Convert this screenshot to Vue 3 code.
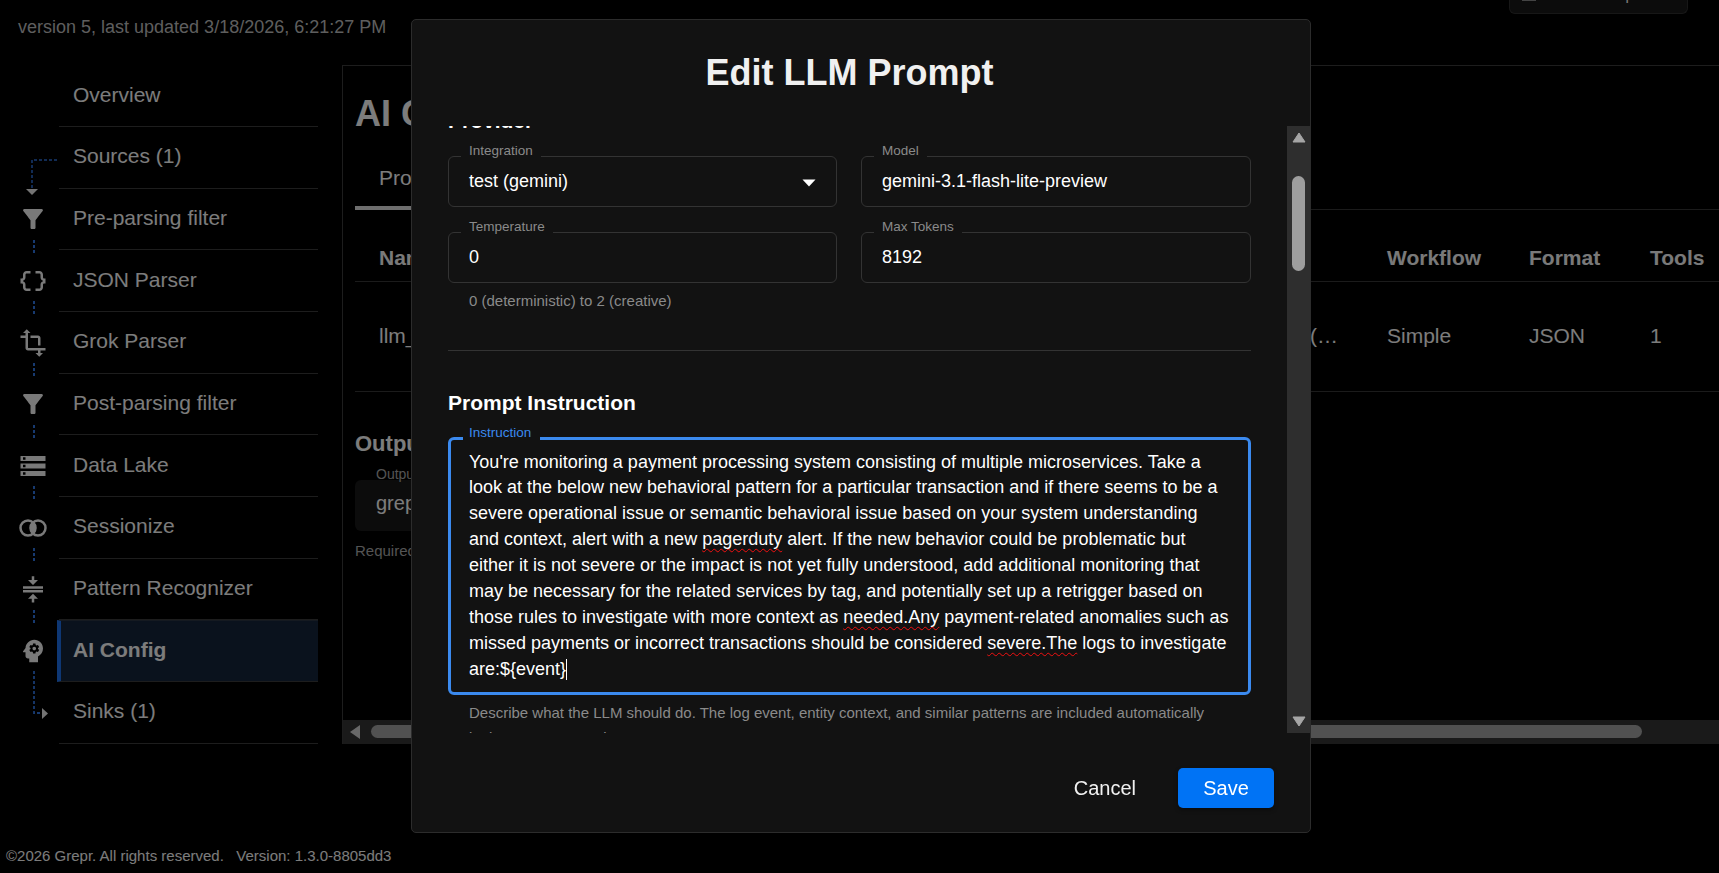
<script setup>
import { onMounted, ref } from "vue"

const filter = ["M4.25 5.61C6.27 8.2 10 13 10 13v6c0 .55.45 1 1 1h2c.55 0 1-.45 1-1v-6s3.72-4.8 5.74-7.39c.51-.66.04-1.61-.79-1.61H5.04c-.83 0-1.3.95-.79 1.61z"]

const navItems = [
  { label: "Overview" },
  { label: "Sources (1)", source: true },
  { label: "Pre-parsing filter", icon: filter, link: true },
  { label: "JSON Parser", link: true, icon: ["M4 7v2c0 .55-.45 1-1 1H2v4h1c.55 0 1 .45 1 1v2c0 1.65 1.35 3 3 3h3v-2H7c-.55 0-1-.45-1-1v-2c0-1.3-.84-2.42-2-2.83v-.34C5.16 11.42 6 10.3 6 9V7c0-.55.45-1 1-1h3V4H7C5.35 4 4 5.35 4 7zm17 3c-.55 0-1-.45-1-1V7c0-1.65-1.35-3-3-3h-3v2h3c.55 0 1 .45 1 1v2c0 1.3.84 2.42 2 2.83v.34c-1.16.41-2 1.52-2 2.83v2c0 .55-.45 1-1 1h-3v2h3c1.65 0 3-1.35 3-3v-2c0-.55.45-1 1-1h1v-4h-1z"] },
  { label: "Grok Parser", link: true, icon: ["M22 18v-2H8V4h2L7 1 4 4h2v2H2v2h4v8c0 1.1.9 2 2 2h8v2h-2l3 3 3-3h-2v-2h4zM10 8h6v6h2V8c0-1.1-.9-2-2-2h-6v2z"] },
  { label: "Post-parsing filter", icon: filter, link: true },
  { label: "Data Lake", link: true, icon: ["M2 20h20v-4H2v4zm2-3h2v2H4v-2zM2 4v4h20V4H2zm4 3H4V5h2v2zm-4 7h20v-4H2v4zm2-3h2v2H4v-2z"] },
  { label: "Sessionize", link: true, icon: [
    "M1 12a7 7 0 1 0 14 0a7 7 0 1 0-14 0zM3 12a5 5 0 1 0 10 0a5 5 0 1 0-10 0z",
    "M9 12a7 7 0 1 0 14 0a7 7 0 1 0-14 0zM11 12a5 5 0 1 0 10 0a5 5 0 1 0-10 0z",
    "M9.5 12c0-2.2.9-4.2 2.5-5.6 1.6 1.4 2.5 3.4 2.5 5.6s-.9 4.2-2.5 5.6c-1.6-1.4-2.5-3.4-2.5-5.6z"
  ] },
  { label: "Pattern Recognizer", link: true, icon: ["M8 19h3v3h2v-3h3l-4-4-4 4zm8-15h-3V1h-2v3H8l4 4 4-4zM4 9v2h16V9H4z", "M4 12h16v2H4z"] },
  { label: "AI Config", active: true, icon: [
    "M13 8.57c-.79 0-1.43.64-1.43 1.43s.64 1.43 1.43 1.43 1.43-.64 1.43-1.43-.64-1.43-1.43-1.43z",
    "M13 3C9.25 3 6.2 5.94 6.02 9.64L4.1 12.2c-.25.33-.01.8.4.8H6v3c0 1.1.9 2 2 2h1v3h7v-4.68c2.36-1.12 4-3.53 4-6.32 0-3.87-3.13-7-7-7zm3 7c0 .13-.01.26-.02.39l.83.66c.08.06.1.16.05.25l-.8 1.39c-.05.09-.16.12-.24.09l-.99-.4c-.21.16-.43.29-.67.39L14 13.83c-.01.1-.1.17-.2.17h-1.6c-.1 0-.18-.07-.2-.17l-.15-1.06c-.25-.1-.47-.23-.68-.39l-.99.4c-.09.03-.2 0-.25-.09l-.8-1.39c-.05-.08-.03-.19.05-.25l.84-.66c-.01-.13-.02-.26-.02-.39s.02-.27.04-.39l-.85-.66c-.08-.06-.1-.16-.05-.26l.8-1.38c.05-.09.15-.12.24-.09l1 .4c.2-.15.43-.29.67-.39L12 6.17c.02-.1.1-.17.2-.17h1.6c.1 0 .18.07.2.17l.15 1.06c.24.1.46.23.67.39l1-.4c.09-.03.2 0 .24.09l.8 1.38c.05.09.03.2-.05.26l-.85.66c.03.12.04.25.04.39z"
  ] },
  { label: "Sinks (1)", sink: true }
]

// 元の画面はモーダル本文が少しスクロールされた状態
const scroller = ref(null)
onMounted(() => {
  scroller.value.scrollTop = 40
})
</script>

<template>
  <div class="page">
    <header class="top">
      <span class="version">version 5, last updated 3/18/2026, 6:21:27 PM</span>
      <div class="top-btn">
        <span class="top-icon"></span>
        <span>Save as Template</span>
      </div>
    </header>

    <main class="main">
      <nav class="nav">
        <div v-for="item in navItems" :key="item.label" class="nav-item" :class="{ active: item.active }">
          <span class="nav-icon">
            <svg v-if="item.icon" viewBox="0 0 24 24" width="30" height="30">
              <path v-for="d in item.icon" :key="d" :d="d" fill="#f2f2f2" fill-rule="evenodd" />
            </svg>
          </span>
          <span class="nav-label">{{ item.label }}</span>
          <i v-if="item.link" class="link"></i>
          <svg v-if="item.source" class="flow" width="60" height="70">
            <path d="M57 33H32V61" fill="none" stroke="#2f74e0" stroke-width="1.5" stroke-dasharray="3 2" />
            <path d="M26 62h12l-6 6z" fill="#e8e8e8" />
          </svg>
          <svg v-if="item.sink" class="flow sink" width="60" height="70">
            <path d="M34 1V43H42" fill="none" stroke="#2f74e0" stroke-width="1.8" stroke-dasharray="3 2" />
            <path d="M42 38l6 5.500-6 5.500z" fill="#e8e8e8" />
          </svg>
        </div>
      </nav>

      <section class="panel">
        <div class="panel-body">
          <h1 class="panel-title">AI Config</h1>
          <div class="tabs"><span class="tab">Prompts</span></div>
          <div class="table-row head">
            <span>Name</span>
            <span class="right"></span>
            <span>Workflow</span>
            <span>Format</span>
            <span>Tools</span>
          </div>
          <div class="table-row body-row">
            <span>llm_prompt</span>
            <span class="right">gemini-3.1 (…</span>
            <span>Simple</span>
            <span>JSON</span>
            <span>1</span>
          </div>
          <h2 class="output-title">Output</h2>
          <div class="output-field">
            <small>Output</small>
            <span>grepr_output</span>
          </div>
          <p class="output-help">Required</p>
        </div>
        <div class="hbar">
          <svg width="14" height="14" viewBox="0 0 14 14"><path d="M12 0v14L2 7z" fill="#d0d0d0" /></svg>
          <div class="hthumb"></div>
        </div>
      </section>
    </main>

    <footer class="foot">©2026 Grepr. All rights reserved.&nbsp;&nbsp; Version: 1.3.0-8805dd3</footer>

    <div class="overlay">
      <div class="modal">
        <div class="modal-head">Edit LLM Prompt</div>

        <div class="modal-middle">
          <div ref="scroller" class="modal-body">
            <h3 class="section-title">Provider</h3>
            <div class="form-grid">
              <div class="field">
                <label>Integration</label>
                <span class="value">test (gemini)</span>
                <svg class="caret" width="14" height="8" viewBox="0 0 14 8"><path d="M0.500 0.500h13L7 7.500z" fill="#fff" /></svg>
              </div>
              <div class="field">
                <label>Model</label>
                <span class="value">gemini-3.1-flash-lite-preview</span>
              </div>
              <div>
                <div class="field">
                  <label>Temperature</label>
                  <span class="value">0</span>
                </div>
                <p class="help">0 (deterministic) to 2 (creative)</p>
              </div>
              <div class="field">
                <label>Max Tokens</label>
                <span class="value">8192</span>
              </div>
            </div>

            <hr class="divider" />

            <h3 class="section-title">Prompt Instruction</h3>
            <div class="field focused">
              <label>Instruction</label>
              <div class="prompt">You're monitoring a payment processing system consisting of multiple microservices. Take a look at the below new behavioral pattern for a particular transaction and if there seems to be a severe operational issue or semantic behavioral issue based on your system understanding and context, alert with a new <span class="typo">pagerduty</span> alert. If the new behavior could be problematic but either it is not severe or the impact is not yet fully understood, add additional monitoring that may be necessary for the related services by tag, and potentially set up a retrigger based on those rules to investigate with more context as <span class="typo">needed.Any</span> payment-related anomalies such as missed payments or incorrect transactions should be considered <span class="typo">severe.The</span> logs to investigate are:${event}<i class="cursor"></i></div>
            </div>
            <p class="help wide">Describe what the LLM should do. The log event, entity context, and similar patterns are included automatically in the prompt at runtime.</p>
          </div>

          <div class="vbar">
            <svg class="arrow up" width="14" height="11" viewBox="0 0 14 11"><path d="M7 1l6 9H1z" fill="#a6a6a6" stroke="#a6a6a6" stroke-linejoin="round" /></svg>
            <div class="vthumb"></div>
            <svg class="arrow down" width="14" height="11" viewBox="0 0 14 11"><path d="M7 10L1 1h12z" fill="#a6a6a6" stroke="#a6a6a6" stroke-linejoin="round" /></svg>
          </div>
        </div>

        <div class="modal-foot">
          <button class="btn-cancel">Cancel</button>
          <button class="btn-save">Save</button>
        </div>
      </div>
    </div>
  </div>
</template>

<style>
html,
body {
  margin: 0;
  background: #000;
}
</style>

<style scoped>
.page {
  position: relative;
  height: 100vh;
  display: flex;
  flex-direction: column;
  overflow: hidden;
  background: #000;
  color: #f8f8f8;
  font-family: "Liberation Sans", Arial, sans-serif;
}

/* ヘッダー */
.top {
  height: 64.6px;
  flex: none;
  display: flex;
  justify-content: space-between;
  align-items: flex-start;
}
.version {
  margin: 16px 0 0 18px;
  font-size: 18px;
  line-height: 22px;
  color: #bcbcbc;
}
.top-btn {
  width: 179px;
  height: 14px;
  margin-right: 31px;
  padding: 0 0 8px 12px;
  box-sizing: border-box;
  display: flex;
  align-items: flex-end;
  gap: 3px;
  overflow: hidden;
  background: #181818;
  border: 1px solid #2e2e2e;
  border-top: 0;
  border-radius: 0 0 6px 6px;
  font-size: 15px;
  line-height: 20px;
  white-space: nowrap;
}
.top-icon {
  width: 14px;
  height: 20px;
  margin-bottom: 4px;
  background: #888;
  flex: none;
}

.main {
  height: 679px;
  flex: none;
  display: flex;
}

/* サイドメニュー */
.nav {
  width: 342px;
  flex: none;
  padding-top: 0.6px;
}
.nav-item {
  position: relative;
  height: 61.7px;
  display: flex;
  align-items: center;
}
.nav-icon {
  width: 30px;
  height: 30px;
  margin: 0 11px 0 18px;
  flex: none;
}
.nav-label {
  width: 259px;
  height: 100%;
  box-sizing: border-box;
  padding: 0 0 2px 14px;
  display: flex;
  align-items: center;
  border-bottom: 1px solid #3a3a3a;
  font-size: 21px;
}
.active .nav-label {
  width: 261px;
  margin-left: -2px;
  padding-left: 12px;
  background: #14243a;
  border-left: 4px solid #1c6fe8;
  border-top: 1px solid #2a3442;
  font-weight: 700;
}
.link {
  position: absolute;
  left: 33px;
  top: 51px;
  width: 2px;
  height: 15px;
  background: repeating-linear-gradient(to bottom, #2f74e0 0 3px, transparent 3px 5px);
}
.flow {
  position: absolute;
  left: 0;
  top: 0;
  overflow: visible;
}
.flow.sink {
  top: -12px;
}

/* メインパネル */
.panel {
  flex: 1;
  min-width: 0;
  display: flex;
  flex-direction: column;
  box-sizing: border-box;
  border-top: 1px solid #3a3a3a;
  border-left: 1px solid #3a3a3a;
}
.panel-body {
  flex: 1;
  padding-left: 12px;
  overflow: hidden;
}
.panel-title {
  margin: 25px 0 0;
  font-size: 36px;
  line-height: 46px;
}
.tabs {
  height: 73px;
  box-sizing: border-box;
  border-bottom: 1px solid #363636;
  display: flex;
}
.tab {
  padding: 28px 24px 0;
  height: 73px;
  box-sizing: border-box;
  line-height: 26px;
  font-size: 21px;
  border-bottom: 4px solid #ddd;
}
.table-row {
  display: grid;
  grid-template-columns: 400px 608px 142px 121px 1fr;
  align-items: center;
  border-bottom: 1px solid #363636;
  font-size: 21px;
}
.table-row span {
  padding-left: 24px;
  white-space: nowrap;
}
.table-row .right {
  padding: 0 25px 0 0;
  text-align: right;
}
.head {
  height: 72px;
  padding-bottom: 11px;
  box-sizing: border-box;
  align-items: end;
  font-weight: 700;
  color: #f2f2f2;
}
.body-row {
  height: 109px;
}
.output-title {
  margin: 38px 0 0;
  font-size: 22px;
  line-height: 28px;
}
.output-field {
  position: relative;
  width: 400px;
  height: 51px;
  margin-top: 22px;
  padding: 0 21px 3px;
  box-sizing: border-box;
  display: flex;
  align-items: center;
  background: #181818;
  border-radius: 6px;
  font-size: 20px;
}
.output-field small {
  position: absolute;
  left: 21px;
  top: -14px;
  font-size: 14px;
  color: #a8a8a8;
}
.output-help {
  margin: 10px 0 0;
  font-size: 15px;
  line-height: 20px;
  color: #a8a8a8;
}
.hbar {
  height: 24px;
  flex: none;
  display: flex;
  align-items: center;
  gap: 9px;
  padding-left: 5px;
  background: #343434;
}
.hthumb {
  width: 1271px;
  height: 13px;
  border-radius: 7px;
  background: #a2a2a2;
}

.foot {
  margin-top: auto;
  padding: 0 0 8px 6px;
  font-size: 15px;
  line-height: 18px;
}

/* モーダル */
.overlay {
  position: fixed;
  inset: 0;
  padding: 19px 0 0 3px;
  box-sizing: border-box;
  display: flex;
  justify-content: center;
  align-items: flex-start;
  background: rgba(0, 0, 0, 0.5);
}
.modal {
  width: 900px;
  height: 814px;
  box-sizing: border-box;
  display: flex;
  flex-direction: column;
  background: #121212;
  border: 1px solid #2c2c2c;
  border-radius: 5px;
  color: #fff;
}
.modal-head {
  height: 106px;
  flex: none;
  padding-right: 23px;
  display: flex;
  align-items: center;
  justify-content: center;
  font-size: 36px;
  font-weight: 700;
  color: #f0f0f0;
}
.modal-middle {
  height: 607px;
  flex: none;
  display: flex;
}
.modal-body {
  flex: 1;
  min-width: 0;
  padding: 19px 36px 20px;
  overflow: hidden;
}
.section-title {
  margin: 0;
  font-size: 21px;
  line-height: 32px;
  font-weight: 700;
}
.form-grid {
  margin-top: 19px;
  display: grid;
  grid-template-columns: 389px 390px;
  column-gap: 24px;
  row-gap: 25px;
}

/* 入力欄 */
.field {
  position: relative;
  height: 51px;
  padding: 0 20px;
  box-sizing: border-box;
  display: flex;
  align-items: center;
  border: 1px solid #333;
  border-radius: 6px;
}
.field label {
  position: absolute;
  left: 12px;
  top: -14px;
  padding: 0 8px;
  background: #121212;
  font-size: 13.5px;
  line-height: 16px;
  color: #8a8a8a;
}
.value {
  font-size: 18px;
}
.caret {
  position: absolute;
  right: 20px;
  top: 22px;
}
.focused {
  height: 258px;
  margin-top: 18px;
  align-items: flex-start;
  padding: 9.5px 18px 0;
  border: 3px solid #3b8aef;
}
.focused label {
  top: -15px;
  padding: 0 9px 0 6px;
  color: #3b8aef;
}
.prompt {
  font-size: 18px;
  line-height: 1.4375;
}
.typo {
  text-decoration: underline wavy #f01010 1.2px;
  text-decoration-skip-ink: none;
  text-underline-offset: 3px;
}
.cursor {
  display: inline-block;
  width: 1px;
  height: 21px;
  margin-bottom: -5px;
  background: #fff;
}
.help {
  margin: 5px 0 0;
  padding: 0 21px;
  font-size: 15px;
  line-height: 25px;
  color: #8a8a8a;
}
.help.wide {
  padding-right: 40px;
}
.divider {
  height: 1px;
  margin: 37px 0 36px;
  border: 0;
  background: #333;
}

/* スクロールバー */
.vbar {
  position: relative;
  width: 23px;
  flex: none;
  background: #2e2e2e;
}
.arrow {
  position: absolute;
  left: 4.5px;
}
.arrow.up {
  top: 6px;
}
.arrow.down {
  bottom: 6px;
}
.vthumb {
  position: absolute;
  left: 5px;
  top: 50px;
  width: 13px;
  height: 95px;
  border-radius: 7px;
  background: #9e9e9e;
}

.modal-foot {
  flex: 1;
  padding: 35px 36px 0 0;
  display: flex;
  justify-content: flex-end;
  align-items: flex-start;
  gap: 26px;
}
.modal-foot button {
  height: 40px;
  border: 0;
  font: 20px "Liberation Sans", Arial, sans-serif;
}
.btn-cancel {
  padding: 0 16px;
  background: none;
  color: #f0f0f0;
}
.btn-save {
  width: 96px;
  background: #0073f5;
  color: #fff;
  border-radius: 5px;
  box-shadow: 0 2px 4px rgba(0, 0, 0, 0.4);
}
</style>
